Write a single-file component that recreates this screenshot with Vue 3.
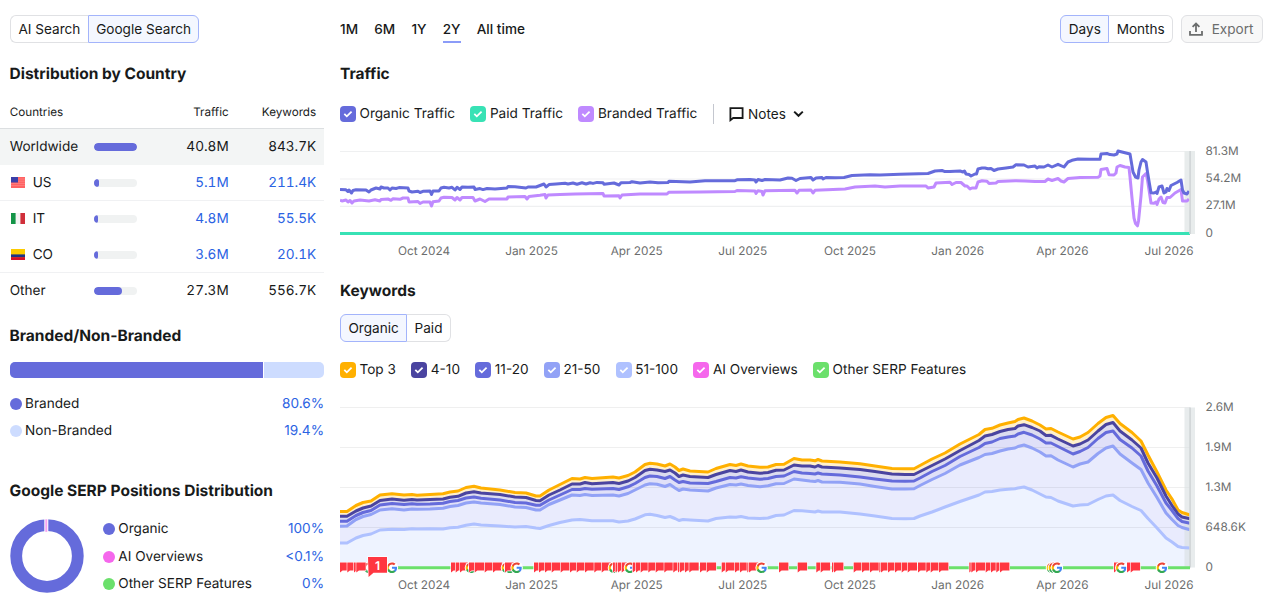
<script setup>
import { ref } from 'vue'

const engine = ref('Google Search')
const period = ref('2Y')
const scale = ref('Days')
const kwType = ref('Organic')

const periods = ['1M', '6M', '1Y', '2Y', 'All time']

const countries = [
  { name: 'Worldwide', bar: 100, traffic: '40.8M', keywords: '843.7K', active: true },
  { name: 'US', flag: 'us', bar: 12, traffic: '5.1M', keywords: '211.4K', link: true },
  { name: 'IT', flag: 'it', bar: 11, traffic: '4.8M', keywords: '55.5K', link: true },
  { name: 'CO', flag: 'co', bar: 9, traffic: '3.6M', keywords: '20.1K', link: true },
  { name: 'Other', bar: 67, traffic: '27.3M', keywords: '556.7K' }
]

const branded = [
  { name: 'Branded', value: '80.6%', color: '#656bdb' },
  { name: 'Non-Branded', value: '19.4%', color: '#cddcff' }
]

const serp = [
  { name: 'Organic', value: '100%', color: '#656bdb' },
  { name: 'AI Overviews', value: '<0.1%', color: '#f567ec' },
  { name: 'Other SERP Features', value: '0%', color: '#6be06b' }
]

const trafficLegend = [
  { name: 'Organic Traffic', color: '#656bdb' },
  { name: 'Paid Traffic', color: '#38e2b5' },
  { name: 'Branded Traffic', color: '#bf8aff' }
]

const keywordLegend = [
  { name: 'Top 3', color: '#ffb000' },
  { name: '4-10', color: '#4a44a0' },
  { name: '11-20', color: '#656bdb' },
  { name: '21-50', color: '#92a2f6' },
  { name: '51-100', color: '#afc1ff' },
  { name: 'AI Overviews', color: '#f567ec' },
  { name: 'Other SERP Features', color: '#6be06b' }
]

const months = [
  { x: 424, label: 'Oct 2024' },
  { x: 531.5, label: 'Jan 2025' },
  { x: 636.7, label: 'Apr 2025' },
  { x: 742.8, label: 'Jul 2025' },
  { x: 850, label: 'Oct 2025' },
  { x: 957.7, label: 'Jan 2026' },
  { x: 1062.5, label: 'Apr 2026' },
  { x: 1169, label: 'Jul 2026' }
]

const trafficTicks = [
  { y: 151.5, label: '81.3M' },
  { y: 179, label: '54.2M' },
  { y: 206.3, label: '27.1M' },
  { y: 234, label: '0' }
]

const keywordTicks = [
  { y: 407.5, label: '2.6M' },
  { y: 447.5, label: '1.9M' },
  { y: 487.5, label: '1.3M' },
  { y: 527.5, label: '648.6K' },
  { y: 567.7, label: '0' }
]

const organicLine = '340,189.5 346,189.8 348,191.5 349,190 351.5,193 353,190.5 356,189.8 366,190 369,192 371,190 376,188 378,188.5 380,189 381,187 384,188 388,188 390,190 392,188 396,188.5 399,187.6 408,188 409,191 412,192 418,191.3 420,192.5 423,191.3 430,191 431.5,194.5 433,191 439,191 441,188 444,187.3 449,188 452,187.3 455,190 457,187.3 460,189.5 462,187 468,187.3 474,187 475,189.5 480,188.6 483,189.6 487,188.5 495,189 507,188 508,186.5 515,186.8 526,188 528,187 536,187 540,185.5 544,184 546,187 549,184.6 556,184 565,183.2 568,184 573,183 577,184.2 582,182.8 586,184 590,182.7 593,183.4 597,182.4 603,182.7 604,184.3 614,183 619,185 621,182.7 630,182.5 632,181.7 640,183 650,182 658,182.7 668,182.5 669,181.3 690,182 705,180.8 735,180.7 737,179.8 750,179.6 755,180 756,182 758,179.5 762,180.5 765,179.5 780,180 788,178 792,178.3 796,180.5 800,178.5 811,177.5 813,180 816,178 822,177.5 823,179 826,177.5 835,177.8 844,177.5 852,175.5 870,174.7 880,175 900,174.2 928,173.5 935,171 942,170.5 945,171.6 950,171.5 960,171 963,172 964.5,171 966,174 969,174.5 971,176 975,174 976.5,174 978,169 982,168 985,168 988,168.7 991,168.4 994,170.5 998,169 1006,168 1013,167 1016,164.8 1024,165 1028,167 1035,166 1037,168 1039,166.8 1044,167 1048,165 1052,167 1058,164.3 1064,167 1068,162 1072,160.3 1078,159 1090,159.3 1100,159.3 1101,154 1107,153.5 1110,154.6 1114,155 1117,154 1118,151 1125,152.8 1130,154 1131.5,163 1133,172 1135.5,177 1138,178 1139,170 1141,162 1142.5,159.5 1146,162 1147.5,172 1149.5,184 1151,192.8 1154,193 1156,192 1157,193.5 1159,187 1162,186 1164,193 1166,192 1167,188.5 1169,190.5 1171,185.5 1177,182.5 1181,180 1182.5,190 1184,193 1187,194 1189,191'
const brandedLine = '340,200 342,201 346,200 348,202 350,200.5 352,203 354,201 360,200 369,201 375,199.8 380,201 381,199.5 388,199 391,200.3 393,198.7 400,199.3 403,198 408,198 409,202 418,201.5 420,203.5 423,202 430,202 431.5,206 433,201.8 439,201 441,198 444,197.3 452,197.5 455,200 457,197.5 460,200 462,197.5 473,197.5 475,201 480,199 485,201.5 489,199 507,199 508,197 525,196.5 527,199 529,196.5 540,195.3 545,194.5 546,198 548,195 560,194.5 575,194 603,193.5 604,196 619,195.8 620,198 622,195 640,194 667,194 669,192.2 700,192 735,191.5 737,190.5 755,191 756,193.5 758,190.7 762,191.5 763,195 765,190.7 795,190.3 797,193 799,190.3 811,190 813,193 815,190.3 845,189 855,187 875,186 885,187 900,186 926,186 928,188 934,187 936,183 950,182.3 952,184.5 956,182.5 961,182.5 965,186 967,186 970,189 972,188 976,188 978,182 982,180.8 987,181.3 989,183.4 996,183 998,181.5 1015,180.7 1025,181 1035,181.5 1045,181.5 1048,179 1052,180.5 1058,178.5 1061,181 1064,182 1068,178.5 1080,177.5 1098,177.3 1100,176 1101,169.5 1107,168.5 1109,174.8 1114,175 1116,173 1117,167 1120,165.5 1125,167 1129,167.5 1130,177 1132,198 1134,218 1135.5,223.5 1137.5,225.8 1138.5,221 1141,196 1142.5,177 1146,173.5 1147.5,180 1149.5,193 1151,203 1154,203.3 1156,202 1157,204.5 1159,199 1161,197 1163,202.5 1165,203 1167,197.5 1170,197.5 1175,193 1181,189.5 1182.5,201 1187,201 1189,199'

// x, then the five stacked levels from Top 3 down to 51-100
const levels = [
  [340, 511.5, 516.3, 521.3, 526.3, 543],
  [347, 511.5, 516.3, 521.3, 526, 543],
  [356, 505.5, 511, 515.5, 519.5, 538],
  [363, 502.5, 508, 512.5, 516.5, 535.5],
  [371, 501, 506, 510.5, 514.5, 534],
  [380, 495, 500.5, 505, 510, 530],
  [392, 493.8, 499, 503.5, 508.8, 529.3],
  [404, 495, 500.3, 504.5, 510, 529.5],
  [412, 494.5, 499.5, 503.7, 509, 528.7],
  [417, 495.2, 500, 504.2, 509.3, 529],
  [430, 494.5, 499.5, 504, 509, 528.7],
  [443, 493.8, 499, 503.2, 508.3, 529],
  [450, 492, 497.3, 501.5, 506.5, 527.8],
  [458, 491, 496.3, 500.5, 505.5, 527.2],
  [466, 487.5, 493, 498, 503, 525.2],
  [474, 486.3, 491.8, 497, 502, 524],
  [481, 488, 493, 498.2, 503, 525],
  [500, 490, 494.5, 500, 504.5, 526],
  [515, 492.5, 497, 502.5, 507, 527],
  [526, 493, 497.5, 503, 507.5, 526.5],
  [536, 496, 500.5, 505.3, 510, 528],
  [540, 496, 500.7, 505.3, 510, 528.5],
  [549, 490, 495, 500, 504.5, 525.5],
  [560, 484.5, 490, 495, 500, 522.5],
  [572, 478.5, 484, 489.5, 495, 520],
  [580, 479, 484, 489.5, 495.5, 519.5],
  [585, 477.5, 482.5, 488.5, 494.5, 520],
  [592, 478.5, 483.7, 489.3, 495.5, 520.7],
  [613, 477, 482.5, 488.5, 495, 520.7],
  [619, 478, 483.5, 489.5, 496, 522],
  [628, 475.5, 481, 486.8, 493.5, 521],
  [635, 472, 477.5, 483.5, 490, 519],
  [645, 464.5, 470.5, 477.5, 485, 514.8],
  [650, 463.3, 469.3, 476, 483.8, 514.3],
  [657, 464, 470, 476.5, 484.3, 515.5],
  [665, 466, 471.5, 478.5, 486.5, 517.5],
  [670, 464, 470, 476.5, 484.5, 516.5],
  [675, 467, 473, 480, 488, 518.5],
  [679, 470.5, 476.5, 482.5, 490.5, 520.5],
  [683, 469, 475, 481.5, 489, 519.5],
  [690, 471, 476.5, 483, 490, 520],
  [708, 472, 477.5, 483.5, 491, 521],
  [716, 468.5, 474.5, 481.5, 488, 518.5],
  [730, 464.5, 470.5, 477.5, 484.5, 517],
  [736, 465.5, 471.5, 478, 485, 517.3],
  [741, 464, 470, 476.7, 484, 516.5],
  [748, 466, 472, 478, 485.5, 518],
  [760, 467.3, 473.3, 479.3, 486.8, 518.5],
  [768, 467, 472.5, 478.5, 485.8, 518],
  [776, 464.5, 470.3, 476.5, 483.8, 515.5],
  [784, 464.3, 470, 476, 483.5, 515],
  [794, 458.5, 465, 471.5, 479, 510.5],
  [802, 460, 466, 473, 480, 510.8],
  [810, 460, 466, 473.5, 481, 511.5],
  [815, 460.8, 467, 474, 481.5, 512],
  [818, 459.5, 465.5, 473, 480.5, 511],
  [822, 461, 467, 474, 482, 512],
  [840, 462, 468, 475, 482.3, 512],
  [860, 463.7, 469.5, 477, 484, 514],
  [875, 466, 471.5, 479, 486.5, 516],
  [892, 468.5, 474, 481, 489, 518.5],
  [905, 468.7, 474.5, 481.3, 489, 518.7],
  [914, 468.8, 474.5, 481, 488.7, 518.5],
  [920, 465.5, 471.5, 478, 485.5, 516],
  [932, 459, 465.5, 471.5, 479.5, 512],
  [945, 453, 459, 465.5, 473.5, 507],
  [960, 444, 450.5, 456.5, 465, 501.5],
  [979, 434.5, 440.5, 447.5, 457.5, 495],
  [985, 429.5, 436, 443.5, 454.5, 492],
  [992, 428.3, 434.5, 442, 453.5, 491.5],
  [1000, 425, 431.5, 438.5, 451, 490],
  [1008, 423, 429.5, 437, 449, 489.3],
  [1015, 421.5, 428.5, 436, 448, 488.8],
  [1018, 419.5, 426, 434, 446.5, 488],
  [1024, 418, 424.7, 432.3, 445, 487],
  [1032, 421, 427.5, 435, 448, 490],
  [1040, 425, 431, 439, 452, 494],
  [1046, 429, 435.5, 443, 456, 497],
  [1051, 428.5, 435.3, 443, 455.8, 497.5],
  [1058, 432, 439, 446.5, 460, 501],
  [1073, 439, 446, 454, 467, 506],
  [1080, 437, 444, 451.5, 464, 505],
  [1088, 432.5, 440, 447.5, 462, 504.5],
  [1098, 423.5, 431, 438.5, 453.5, 499.5],
  [1106, 417.5, 424.5, 432.5, 448, 496],
  [1113, 415.5, 422.5, 431, 446, 495],
  [1120, 423.5, 431, 439.5, 454, 500.5],
  [1132, 432.5, 440, 448, 463, 506.5],
  [1141, 441, 448, 456, 469.5, 510.5],
  [1148, 455, 463, 471, 483, 518.5],
  [1157, 472, 478, 486, 497.5, 528],
  [1166, 490, 496, 503, 513, 538],
  [1172, 499, 505.5, 510.5, 519.5, 542],
  [1178, 510, 514, 518.5, 525.5, 546.5],
  [1182, 512.5, 517, 521.5, 527.5, 547.5],
  [1190, 515, 518.8, 523.3, 529.8, 548]
]

const fills = ['#fff1cc', '#dddcef', '#e0e0f8', '#e9ebfd', '#eef3ff']

const series = fills.map((fill, i) => ({
  fill,
  color: keywordLegend[i].color,
  points: levels.map(l => `${l[0]},${l[i + 1]}`).join(' ')
})).map(s => ({ ...s, area: `340,567.5 ${s.points} 1190,567.5` }))

// event markers on the zero line, g = google update, the rest are note flags
const markers = [
  340, 347.3, 354, 'g369', 356.3, 'g392', 451, 455.7, 460, 'g471', 469, 474.7, 484.7, 493, 'g507', 'g510', 505,
  'g516.7', 534, 539, 545, 551.7, 560.7, 570, 576.7, 585, 594.3, 601.7, 'g614', 613, 615.5, 618, 621.7, 'g630',
  632.7, 636, 640.7, 648.3, 655.7, 664.3, 673.3, 678, 680, 685, 689.3, 700, 706.7,
  721.7, 725.7, 735, 740, 747.3, 749, 'g761.7', 779, 797.7, 816.3, 820.7, 832, 834,
  853.7, 862, 870, 879.3, 881, 888, 895, 901.7, 907.7, 918, 926.3, 930.7, 939,
  969.3, 971.3, 976, 985.7, 991, 996.3, 1000, 'g1052', 'g1054', 'g1057', 1114, 'g1121.3', 1127, 1130.7, 'g1162'
].map(m => typeof m === 'number'
  ? { id: m, href: '#flag', transform: `translate(${m} 562.6)` }
  : { id: m, href: '#google', transform: `translate(${m.slice(1) - 5.8} 562) scale(.48)` })
</script>

<template>
  <div class="page">
    <aside class="side">
      <div class="group">
        <button
          v-for="e in ['AI Search', 'Google Search']"
          :key="e"
          class="group__btn"
          :class="{ active: engine === e }"
          @click="engine = e"
        >{{ e }}</button>
      </div>

      <h3 class="title title--country">Distribution by Country</h3>
      <div class="table">
        <div class="row row--head">
          <div>Countries</div>
          <div class="num">Traffic</div>
          <div class="num">Keywords</div>
        </div>
        <div v-for="c in countries" :key="c.name" class="row" :class="[{ selected: c.active }, 'row--' + c.name]">
          <div class="country">
            <svg v-if="c.flag" class="flag" width="14" height="11" viewBox="0 0 14 11">
              <g v-if="c.flag === 'us'">
                <rect width="14" height="11" fill="#ff6262" />
                <path d="M0 2h14M0 4.2h14M0 6.4h14M0 8.6h14" stroke="#ff9090" stroke-width=".6" />
                <rect width="7" height="5.5" fill="#3b3fa8" />
              </g>
              <g v-else-if="c.flag === 'it'">
                <rect width="14" height="11" fill="#f4f4f4" />
                <rect width="4.6" height="11" fill="#149447" />
                <rect x="9.4" width="4.6" height="11" fill="#d02f3a" />
              </g>
              <g v-else>
                <rect width="14" height="11" fill="#fccb00" />
                <rect y="5.4" width="14" height="3" fill="#1b3488" />
                <rect y="8.2" width="14" height="2.8" fill="#d5102b" />
              </g>
            </svg>
            <span>{{ c.name }}</span>
          </div>
          <div class="bar"><div class="bar__fill" :style="{ width: c.bar + '%' }"></div></div>
          <div class="num" :class="{ link: c.link }">{{ c.traffic }}</div>
          <div class="num" :class="{ link: c.link }">{{ c.keywords }}</div>
        </div>
      </div>

      <h3 class="title title--branded">Branded/Non-Branded</h3>
      <div class="split"><div class="split__fill"></div></div>
      <ul class="list list--branded">
        <li v-for="b in branded" :key="b.name">
          <span class="dot" :style="{ background: b.color }"></span>
          <span>{{ b.name }}</span>
          <span class="link list__value">{{ b.value }}</span>
        </li>
      </ul>

      <h3 class="title title--serp">Google SERP Positions Distribution</h3>
      <div class="serp">
        <svg class="donut" width="74" height="74" viewBox="0 0 74 74">
          <circle cx="37" cy="37" r="30.8" fill="none" stroke="#656bdb" stroke-width="11.8" />
          <path d="M36.3 0v13" stroke="#fff" stroke-width="4" />
          <path d="M36.3 0.3v12.6" stroke="#f7a3f0" stroke-width="2" />
        </svg>
        <ul class="list list--serp">
          <li v-for="s in serp" :key="s.name">
            <span class="dot" :style="{ background: s.color }"></span>
            <span>{{ s.name }}</span>
            <span class="link list__value">{{ s.value }}</span>
          </li>
        </ul>
      </div>
    </aside>

    <main class="main">
      <div class="toolbar">
        <div class="periods">
          <button
            v-for="p in periods"
            :key="p"
            class="period"
            :class="{ current: period === p }"
            @click="period = p"
          >{{ p }}</button>
        </div>
        <div class="toolbar__right">
          <div class="group">
            <button
              v-for="s in ['Days', 'Months']"
              :key="s"
              class="group__btn"
              :class="{ active: scale === s }"
              @click="scale = s"
            >{{ s }}</button>
          </div>
          <button class="export">
            <svg width="14" height="14" viewBox="0 0 14 14" fill="none" stroke="#6b6d6d" stroke-width="1.8">
              <path d="M1 9v3.9h12V9M7 10V1.6M3.6 4.9 7 1.5l3.4 3.4" />
            </svg>
            <span>Export</span>
          </button>
        </div>
      </div>

      <h3 class="title title--traffic">Traffic</h3>
      <div class="legend">
        <label v-for="l in trafficLegend" :key="l.name" class="check">
          <span class="check__box" :style="{ background: l.color }">
            <svg width="10" height="8" viewBox="0 0 10 8"><path d="M1.3 3.9 3.8 6.3 8.6 1.6" fill="none" stroke="#fff" stroke-width="1.8" /></svg>
          </span>
          <span>{{ l.name }}</span>
        </label>
        <span class="divider"></span>
        <button class="notes">
          <svg width="15" height="15" viewBox="0 0 15 15"><path d="M1.4 13.2V1.2h12.2v9.8H4.2z" fill="none" stroke="#181a1a" stroke-width="1.8" /></svg>
          <span>Notes</span>
          <svg class="notes__arrow" width="11" height="8" viewBox="0 0 11 8"><path d="M1.2 1.6 5.5 5.8 9.8 1.6" fill="none" stroke="#181a1a" stroke-width="2" /></svg>
        </button>
      </div>

      <svg class="chart" width="923" height="120" viewBox="340 142 923 120">
        <g class="grid">
          <line v-for="t in trafficTicks" :key="t.y" x1="340" x2="1190" :y1="t.y" :y2="t.y" />
        </g>
        <rect x="1184.5" y="151" width="10.5" height="83" fill="#e8ecec" />
        <path d="M340 233.6H1190" stroke="#38e2b5" stroke-width="3" />
        <polyline :points="brandedLine" class="line" stroke="#bf8aff" />
        <polyline :points="organicLine" class="line" stroke="#656bdb" />
        <rect x="1189.2" y="151" width="1.8" height="83" fill="#d3d7d9" />
        <text v-for="t in trafficTicks" :key="t.label" class="axis" x="1205.5" :y="t.y + 3">{{ t.label }}</text>
        <text v-for="m in months" :key="m.x" class="axis axis--x" :x="m.x" y="254.7">{{ m.label }}</text>
      </svg>

      <h3 class="title title--keywords">Keywords</h3>
      <div class="group">
        <button
          v-for="k in ['Organic', 'Paid']"
          :key="k"
          class="group__btn"
          :class="{ active: kwType === k }"
          @click="kwType = k"
        >{{ k }}</button>
      </div>
      <div class="legend legend--keywords">
        <label v-for="l in keywordLegend" :key="l.name" class="check">
          <span class="check__box" :style="{ background: l.color }">
            <svg width="10" height="8" viewBox="0 0 10 8"><path d="M1.3 3.9 3.8 6.3 8.6 1.6" fill="none" stroke="#fff" stroke-width="1.8" /></svg>
          </span>
          <span>{{ l.name }}</span>
        </label>
      </div>

      <svg class="chart chart--keywords" width="923" height="200" viewBox="340 398 923 200">
        <defs>
          <path id="flag" d="M0 0h9.4v8H2.6L0 10z" fill="#ff3641" stroke="#fff" stroke-width="1.2" paint-order="stroke" />
          <g id="google">
            <circle cx="12" cy="12" r="13" fill="#fff" />
            <path d="M22.56 12.25c0-.78-.07-1.53-.2-2.25H12v4.26h5.92c-.26 1.37-1.04 2.53-2.21 3.31v2.77h3.57c2.08-1.92 3.28-4.74 3.28-8.09z" fill="#4285f4" />
            <path d="M12 23c2.97 0 5.46-.98 7.28-2.66l-3.57-2.77c-.98.66-2.23 1.06-3.71 1.06-2.86 0-5.29-1.93-6.16-4.53H2.18v2.84C3.99 20.53 7.7 23 12 23z" fill="#34a853" />
            <path d="M5.84 14.1c-.22-.66-.35-1.36-.35-2.1s.13-1.44.35-2.1V7.06H2.18A10.9 10.9 0 0 0 1 12c0 1.78.43 3.45 1.18 4.94z" fill="#fbbc05" />
            <path d="M12 5.38c1.62 0 3.06.56 4.21 1.64l3.15-3.15C17.45 2.09 14.97 1 12 1 7.7 1 3.99 3.47 2.18 7.06L5.84 9.9C6.71 7.31 9.14 5.38 12 5.38z" fill="#ea4335" />
          </g>
        </defs>
        <polygon v-for="s in series" :key="s.fill" :points="s.area" :fill="s.fill" />
        <g class="grid grid--over">
          <line v-for="t in keywordTicks" :key="t.y" x1="340" x2="1190" :y1="t.y" :y2="t.y" />
        </g>
        <rect x="1184.5" y="407.5" width="10.5" height="160" fill="#d9e0e1" fill-opacity=".6" />
        <polyline v-for="s in series" :key="s.color" :points="s.points" class="line" :stroke="s.color" />
        <rect x="1189.2" y="407.5" width="1.8" height="160" fill="#d3d7d9" />
        <path d="M340 567.7H1190" stroke="#6be06b" stroke-width="3" />
        <use v-for="m in markers" :key="m.id" :href="m.href" :transform="m.transform" />
        <path d="M368 557h19v15.8H373.5L368.6 577z" fill="#ff3641" stroke="#fff" stroke-width="1.4" paint-order="stroke" />
        <text class="count" x="377.5" y="570">1</text>
        <text v-for="t in keywordTicks" :key="t.label" class="axis" x="1205.5" :y="t.y + 3.2">{{ t.label }}</text>
        <text v-for="m in months" :key="m.x" class="axis axis--x" :x="m.x" y="588.6">{{ m.label }}</text>
      </svg>
    </main>
  </div>
</template>

<style>
body {
  margin: 0;
  background: #fff;
}
</style>

<style scoped>
.page {
  display: grid;
  grid-template-columns: 324px 923px;
  column-gap: 16px;
  box-sizing: border-box;
  height: 608px;
  overflow: hidden;
  padding-top: 15px;
  font-family: Inter, "Liberation Sans", sans-serif;
  font-size: 13.6px;
  line-height: 20px;
  color: #181a1a;
  text-rendering: geometricPrecision;
}
button {
  font: inherit;
  color: inherit;
  background: none;
  border: none;
  padding: 0;
  cursor: pointer;
}
.group {
  display: flex;
}
.side > .group {
  margin-left: 10px;
}
.group__btn {
  box-sizing: border-box;
  height: 28px;
  padding: 0 7.4px;
  border: 1px solid #e0e1e4;
  background: #fff;
}
.group__btn:first-child {
  border-radius: 6px 0 0 6px;
  border-right: none;
}
.group__btn:last-child {
  border-radius: 0 6px 6px 0;
  border-left: none;
}
.group__btn.active {
  border: 1px solid #a3b4fb;
  background: #f4f7ff;
}
.title {
  margin: 0;
  font-size: 15.5px;
  font-weight: 700;
  line-height: 20px;
}
.side .title {
  margin-left: 9.5px;
}
.title--country {
  padding-top: 20.5px;
}
.title--branded {
  padding-top: 17.5px;
}
.title--serp {
  padding-top: 36.5px;
}
.title--traffic {
  padding-top: 20.5px;
}
.title--keywords {
  padding: 18.5px 0 13px;
}

.table {
  padding-top: 12.5px;
  font-variant-numeric: tabular-nums;
}
.row {
  display: grid;
  grid-template-columns: 84px 43px 92px 87.5px;
  align-items: center;
  box-sizing: border-box;
  height: 36px;
  padding-left: 9.7px;
}
.row--head {
  grid-template-columns: 127px 92px 87.5px;
  height: 32.5px;
  font-size: 11.7px;
  border-bottom: 1px solid #dcdfe1;
}
.row.selected {
  background: #f3f5f5;
}
.row--US,
.row--CO {
  padding-top: 1px;
  border-bottom: 1px solid #f0f1f3;
}
.country {
  display: flex;
  align-items: center;
  gap: 8px;
}
.flag {
  margin-left: 1px;
}
.bar {
  height: 8px;
  border-radius: 4px;
  background: #f0f2f2;
  overflow: hidden;
}
.bar__fill {
  height: 100%;
  border-radius: 4px;
  background: #656bdb;
}
.num {
  text-align: right;
}
.link {
  color: #2b63e3;
}

.split {
  height: 16px;
  margin: 16px 0 0 9.5px;
  border-radius: 5px;
  background: #cddcff;
  overflow: hidden;
}
.split__fill {
  box-sizing: border-box;
  width: 80.8%;
  height: 100%;
  background: #656bdb;
  border-right: 1px solid #fff;
}
.list {
  list-style: none;
  margin: 0;
  padding: 0;
}
.list li {
  display: flex;
  align-items: center;
  height: 27.4px;
}
.list--branded {
  margin: 12px 0 0 9.5px;
}
.list--serp {
  flex: 1;
  padding-top: 1.5px;
}
.dot {
  width: 12px;
  height: 12px;
  margin-right: 3.6px;
  border-radius: 50%;
}
.list__value {
  margin-left: auto;
}
.serp {
  display: flex;
  align-items: center;
  gap: 19px;
  margin: 13px 0 0 9.7px;
}

.toolbar {
  display: flex;
  justify-content: space-between;
}
.periods {
  display: flex;
  gap: 16.2px;
  font-weight: 500;
}
.period {
  box-sizing: border-box;
  height: 28px;
  border-top: 1px solid transparent;
  border-bottom: 2px solid transparent;
}
.period.current {
  border-bottom-color: #8b9cf8;
}
.toolbar__right {
  display: flex;
  gap: 8px;
}
.export {
  display: flex;
  align-items: center;
  gap: 8.5px;
  box-sizing: border-box;
  height: 28px;
  padding: 0 8.5px 0 7px;
  border: 1px solid #e0e1e4;
  border-radius: 6px;
  background: #f8f8f8;
  color: #6b6d6d;
}
.legend {
  display: flex;
  align-items: center;
  gap: 15.4px;
  height: 20px;
  margin-top: 20.5px;
}
.legend--keywords {
  margin-top: 18px;
}
.check {
  display: flex;
  align-items: center;
  gap: 3.5px;
}
.check__box {
  display: flex;
  align-items: center;
  justify-content: center;
  width: 16px;
  height: 16px;
  border-radius: 4px;
}
.divider {
  width: 1px;
  height: 20px;
  background: #c4c7cf;
}
.notes {
  display: flex;
  align-items: center;
  gap: 4px;
}
.notes__arrow {
  margin-left: 3px;
}
.chart {
  display: block;
  margin-top: 18px;
}
.grid line {
  stroke: #eff0f1;
  stroke-width: 1.2;
}
.grid--over line {
  stroke: #191b23;
  stroke-opacity: .07;
}
.line {
  fill: none;
  stroke-width: 3;
  stroke-linejoin: round;
}
.axis {
  font-size: 11.8px;
  fill: #6b6d6d;
}
.axis--x {
  text-anchor: middle;
}
.count {
  font-size: 12px;
  font-weight: 600;
  fill: #fff;
  text-anchor: middle;
}
</style>
